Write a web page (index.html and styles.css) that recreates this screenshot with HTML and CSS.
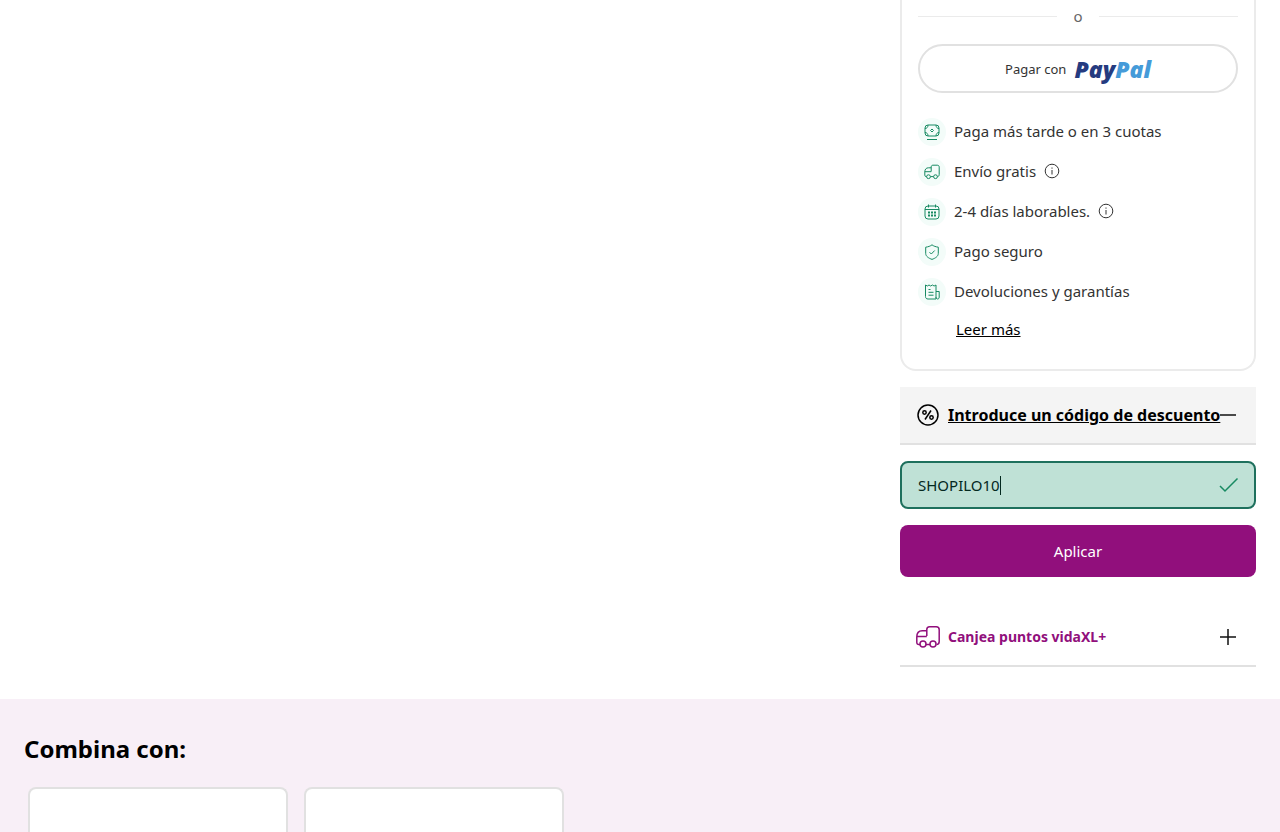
FILE: index.html
```html
<!DOCTYPE html>
<html lang="es">
<head>
    <meta charset="utf-8">
    <meta name="viewport" content="width=device-width, initial-scale=1">
    <title>vidaXL</title>
    <link rel="stylesheet" href="styles.css">
</head>
<body>
<main class="product">
    <aside class="sidebar">
        <section class="buy-box">
            <div class="separator">o</div>
            <button type="button" class="paypal-btn">
                <span>Pagar con</span>
                <span class="paypal-logo">Pay<span>Pal</span></span>
            </button>
            <ul class="benefits">
                <li>
                    <span class="icon">
                        <svg viewBox="0 0 16 16"><rect x="1" y="1" width="14" height="11" rx="3"/><path d="M1 4.500c2 0 3-1.500 3-3.500M15 4.500c-2 0-3-1.500-3-3.500M1 8.500c2 0 3 1.500 3 3.500M15 8.500c-2 0-3 1.500-3 3.500M3 15.500h10"/><path d="M8 5l1.500 1.500L8 8 6.500 6.500z"/></svg>
                    </span>
                    <span>Paga más tarde o en 3 cuotas</span>
                </li>
                <li>
                    <span class="icon">
                        <svg viewBox="0 0 16 16"><path d="M2.500 12.500H2c-.8 0-1.200-.5-1.200-1.200V8c0-2.600 1.300-4.200 3.600-4.200h2.800M7.200 7.500V3c0-1.200.7-1.800 1.800-1.800h4.300c1.200 0 1.900.7 1.900 1.900v7.400c0 1.200-.5 2-1.700 2M.9 7.700h6.300M6.500 12.600h3"/><circle cx="4.500" cy="12.700" r="1.900"/><circle cx="11.500" cy="12.700" r="1.900"/></svg>
                    </span>
                    <span>Envío gratis</span>
                    <svg class="info" viewBox="0 0 16 16"><circle cx="8" cy="8" r="6.800"/><path d="M8 7v4.500M8 4.500v1.200"/></svg>
                </li>
                <li>
                    <span class="icon">
                        <svg viewBox="0 0 16 16"><rect x="1" y="2" width="14" height="13" rx="3"/><path d="M4.500.5v3M11.500.5v3M1 5.500h14"/><path class="dots" d="M4 8.500h2M7 8.500h2M10 8.500h2M4 11.500h2M7 11.500h2M10 11.500h2"/></svg>
                    </span>
                    <span>2-4 días laborables.</span>
                    <svg class="info" viewBox="0 0 16 16"><circle cx="8" cy="8" r="6.800"/><path d="M8 7v4.500M8 4.500v1.200"/></svg>
                </li>
                <li>
                    <span class="icon">
                        <svg viewBox="0 0 16 16"><path d="M8 .8c1.700 1.400 3.800 2 6.300 2.400v6.200c0 3-3 4.800-6.300 6-3.300-1.200-6.300-3-6.300-6V3.200C4.200 2.800 6.300 2.200 8 .8zM5.500 8.200l1.800 1.800 3.400-3.500"/></svg>
                    </span>
                    <span>Pago seguro</span>
                </li>
                <li>
                    <span class="icon">
                        <svg viewBox="0 0 16 16"><path d="M1.500 1l1.800 1 1.700-1 1.700 1 1.700-1 1.700 1 1.900-1v14H4c-1.700 0-2.500-1-2.500-2.500zM12 7.500h3.200V13c0 1.400-.7 2-1.600 2S12 14.300 12 13M4.500 5.500h2M4.500 8.300h5M4.500 11.200h5"/></svg>
                    </span>
                    <span>Devoluciones y garantías</span>
                </li>
            </ul>
            <a href="#" class="read-more">Leer más</a>
        </section>

        <section class="coupon">
            <button type="button" class="accordion accordion-open" aria-expanded="true">
                <svg class="accordion-icon" viewBox="0 0 24 24"><circle cx="12" cy="12" r="10"/><path d="M15 7.500l-6 9"/><circle cx="8.500" cy="9.500" r="1.700"/><circle cx="15.500" cy="14.500" r="1.700"/></svg>
                <span>Introduce un código de descuento</span>
                <svg class="toggle" viewBox="0 0 16 16"><path d="M0 8h16"/></svg>
            </button>
            <form class="coupon-form">
                <div class="field">
                    <input type="text" value="SHOPILO10" aria-label="Código de descuento">
                    <span class="caret"></span>
                    <svg class="check" viewBox="0 0 20 16"><path d="M1 9l5 5L18.500 1.500"/></svg>
                </div>
                <button type="button" class="apply-btn">Aplicar</button>
            </form>
        </section>

        <button type="button" class="accordion accordion-points" aria-expanded="false">
            <svg class="accordion-icon" viewBox="0 0 24 24"><path d="M4 19.500H3c-1.300 0-2.200-.8-2.200-2.200v-5.200c0-3.800 1.800-6.300 5.400-6.300h4.600M10.800 11V4.500c0-1.800 1-2.800 2.800-2.800h6.600c1.900 0 3 1.100 3 3v11.800c0 1.800-.8 3-2.700 3M1 11.500h9.800M10 19.500h4"/><circle cx="7" cy="19" r="3"/><circle cx="17" cy="19" r="3"/></svg>
            <span>Canjea puntos vidaXL+</span>
            <svg class="toggle" viewBox="0 0 16 16"><path d="M0 8h16M8 0v16"/></svg>
        </button>
    </aside>
</main>

<section class="combine">
    <h2>Combina con:</h2>
    <div class="cards">
        <article class="card"></article>
        <article class="card"></article>
    </div>
</section>
</body>
</html>
```
FILE: styles.css
```css
* {
    box-sizing: border-box;
}

body {
    display: flex;
    flex-direction: column;
    min-height: 100vh;
    margin: 0;
    background: #fff;
    color: #333;
    font-family: "Noto Sans", sans-serif;
    font-size: 15px;
    line-height: 24px;
}

button, input {
    font: inherit;
}

button {
    cursor: pointer;
}

svg {
    flex: none;
    fill: none;
    stroke: currentColor;
}

.product {
    display: flex;
    justify-content: flex-end;
    padding: 0 24px 32px;
}

.sidebar {
    width: 356px;
}

/* buy box */
.buy-box {
    padding: 4px 16px 28px;
    border: 2px solid #ebebeb;
    border-top: 0;
    border-radius: 0 0 16px 16px;
}

.separator {
    display: flex;
    align-items: center;
    gap: 16px;
    color: #666;
}

.separator::before, .separator::after {
    content: "";
    flex: 1;
    height: 1px;
    background: #ebebeb;
}

.paypal-btn {
    display: flex;
    align-items: center;
    justify-content: center;
    gap: 8px;
    width: 100%;
    height: 49px;
    margin: 16px 0 18px;
    border: 2px solid #e1e1e1;
    border-radius: 25px;
    background: #fff;
    color: #333;
    font-size: 13px;
}

.paypal-logo {
    color: #253b80;
    font-family: "Open Sans", sans-serif;
    font-size: 23px;
    font-style: italic;
    font-weight: 800;
}

.paypal-logo span {
    color: #459bd9;
}

.benefits {
    margin: 0;
    padding: 0;
    list-style: none;
}

.benefits li {
    display: flex;
    align-items: center;
    gap: 8px;
    height: 40px;
}

.benefits .icon {
    display: flex;
    align-items: center;
    justify-content: center;
    width: 28px;
    height: 28px;
    margin-top: 2px;
    border-radius: 50%;
    background: #f3fcf9;
    color: #178a62;
}

.icon svg {
    width: 16px;
    height: 16px;
}

.icon .dots {
    stroke-width: 2;
}

.info {
    width: 16px;
    height: 16px;
}

.read-more {
    display: block;
    width: max-content;
    margin: 6px 0 0 38px;
    color: #000;
}

/* accordions */
.accordion {
    display: flex;
    align-items: center;
    gap: 8px;
    width: 100%;
    height: 58px;
    padding: 0 20px 0 16px;
    border: 0;
    border-bottom: 2px solid #e1e1e1;
    background: #fff;
    font-weight: 700;
    white-space: nowrap;
}

.accordion span {
    flex: 1;
    min-width: 0;
    text-align: left;
}

.accordion-icon {
    width: 24px;
    height: 24px;
    stroke-width: 1.5;
}

.toggle {
    width: 16px;
    height: 16px;
    margin-left: -8px;
    color: #111;
    stroke-width: 1.5;
}

.accordion-open {
    background: #f4f4f4;
    color: #000;
    font-size: 16px;
    text-decoration: underline;
}

.accordion-points {
    margin-top: 32px;
    color: #910f7c;
    font-size: 14px;
}

/* coupon */
.coupon {
    margin-top: 16px;
}

.coupon-form {
    display: flex;
    flex-direction: column;
    gap: 16px;
    margin-top: 16px;
}

.field {
    position: relative;
}

.field input {
    display: block;
    width: 100%;
    height: 48px;
    padding: 0 48px 0 16px;
    border: 2px solid #1e705d;
    border-radius: 8px;
    outline: 0;
    background: #bfe1d6;
    color: #04291f;
}

.caret {
    position: absolute;
    top: 15px;
    left: 100px;
    width: 1px;
    height: 19px;
    background: #04291f;
}

.field input:focus + .caret {
    display: none;
}

.check {
    position: absolute;
    top: 16px;
    right: 17px;
    width: 20px;
    height: 16px;
    color: #178a62;
    stroke-width: 1.5;
}

.apply-btn {
    height: 52px;
    border: 0;
    border-radius: 8px;
    background: #910f7c;
    color: #fff;
}

/* combine with */
.combine {
    display: flex;
    flex: 1;
    flex-direction: column;
    padding: 34px 24px 0;
    background: #f8eff7;
}

.combine h2 {
    margin: 0 0 22px;
    color: #000;
    font-size: 24px;
    line-height: 32px;
}

.cards {
    display: flex;
    flex: 1;
    gap: 16px;
    padding: 0 4px;
}

.card {
    width: 260px;
    border: 2px solid #e1e1e1;
    border-bottom: 0;
    border-radius: 8px 8px 0 0;
    background: #fff;
}
```
